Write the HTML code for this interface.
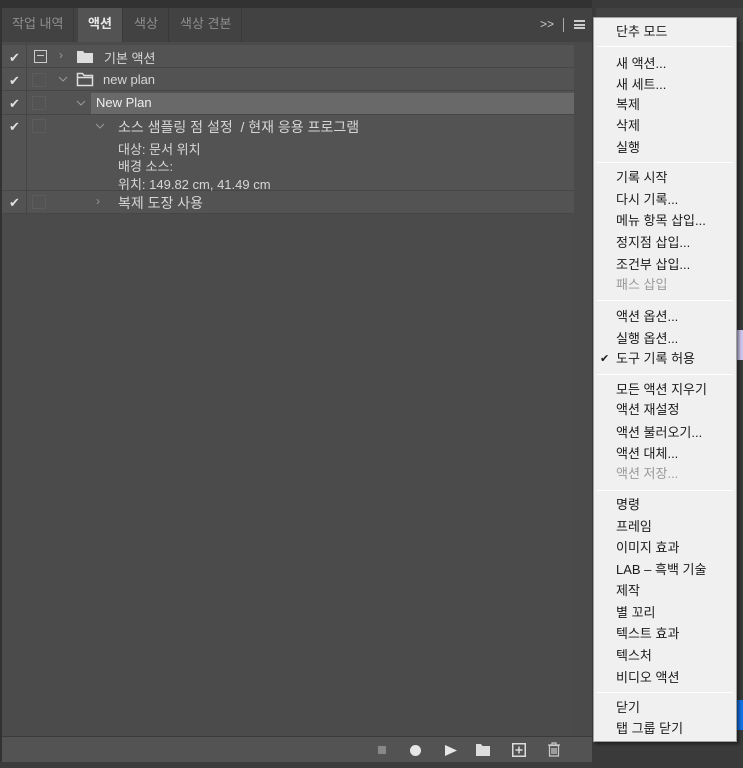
<!DOCTYPE html>
<html><head><meta charset="utf-8"><style>
*{margin:0;padding:0;box-sizing:border-box}
body{width:743px;height:768px;background:#323232;position:relative;overflow:hidden;font-family:"Liberation Sans","Noto Sans CJK KR",sans-serif;font-size:13px;color:#d6d6d6}
.abs{position:absolute}
.tabbar{left:2px;top:8px;width:590px;height:34px;background:#424242}
.tab{position:absolute;top:0;height:34px;line-height:31px;color:#8e8e8e;font-size:13px;padding:0 10px;border-right:1px solid #383838}
.tab.on{background:#535353;color:#e8e8e8;font-weight:bold}
.panel{left:2px;top:42px;width:590px;height:720px;background:#4b4b4b}
.row{position:absolute;left:2px;width:572px;background:#535353;border-bottom:1px solid #464646}
.chk{position:absolute;left:9px;color:#e0e0e0;font-size:13px}
.colsep{position:absolute;left:26px;top:42px;width:1px;height:174px;background:#454545}
.box{position:absolute;left:32px;width:14px;height:14px;border:1px solid #5c5c5c}
.txt{position:absolute;white-space:nowrap}
.menu{left:593px;top:17px;width:144px;height:725px;background:#f0f0f0;border:1px solid #a0a0a0;box-shadow:2px 2px 3px rgba(0,0,0,.5)}
.mi{position:absolute;left:22px;color:#1a1a1a;font-size:13px;white-space:nowrap;line-height:16px}
.mi.dis{color:#9a9a9a}
.sep{position:absolute;left:3px;width:136px;height:1px;background:#bdbdbd;border-bottom:1px solid #fff}
</style></head><body>
<div class="abs tabbar">
 <div class="tab" style="left:0">작업 내역</div>
 <div class="tab on" style="left:76px">액션</div>
 <div class="tab" style="left:122px">색상</div>
 <div class="tab" style="left:168px">색상 견본</div>
 <div class="txt" style="left:538px;top:9px;color:#ccc;font-size:12px">&gt;&gt;</div>
 <div class="abs" style="left:561px;top:10px;width:1px;height:14px;background:#aaa"></div>
 <div class="abs" style="left:572px;top:12px;width:11px;height:9px;border-top:2px solid #ccc;border-bottom:2px solid #ccc"><div style="margin-top:1.5px;height:2px;background:#ccc"></div></div>
</div>
<div class="abs panel"></div>
<div class="abs" style="left:574px;top:42px;width:18px;height:694px;background:#4a4a4a"></div>
<div class="row" style="top:45px;height:23px"></div>
<div class="row" style="top:68px;height:23px"></div>
<div class="row" style="top:91px;height:24px"></div>
<div class="abs" style="left:91px;top:93px;width:483px;height:21px;background:#696969"></div>
<div class="row" style="top:115px;height:76px"></div>
<div class="row" style="top:191px;height:23px"></div>
<div class="colsep"></div>
<div class="chk" style="top:50px">✔</div>
<div class="chk" style="top:73px">✔</div>
<div class="chk" style="top:96px">✔</div>
<div class="chk" style="top:119px">✔</div>
<div class="chk" style="top:195px">✔</div>
<div class="abs" style="left:34px;top:50px;width:13px;height:13px;border:1.5px solid #ccc"><div style="margin:3.5px 2px;height:1.5px;background:#ccc"></div></div>
<div class="box" style="top:73px"></div><div class="box" style="top:96px"></div><div class="box" style="top:119px"></div><div class="box" style="top:195px"></div>
<div class="txt" style="left:59px;top:48px;color:#999;font-size:12px">›</div>
<svg class="abs" style="left:76px;top:49px" width="18" height="15"><path d="M1 2h6l1.5 2H17v10H1z" fill="#ddd"/></svg>
<div class="txt" style="left:104px;top:48px">기본 액션</div>
<svg class="abs" style="left:58px;top:75px" width="10" height="8"><path d="M1 2l4 4 4-4" stroke="#999" fill="none"/></svg>
<svg class="abs" style="left:76px;top:72px" width="18" height="15"><path d="M1.5 1.5h5l1.5 2h8.5v10H1.5z M1.5 5.5h15" stroke="#ddd" stroke-width="1.5" fill="none"/></svg>
<div class="txt" style="left:103px;top:72px">new plan</div>
<svg class="abs" style="left:76px;top:99px" width="10" height="8"><path d="M1 2l4 4 4-4" stroke="#999" fill="none"/></svg>
<div class="txt" style="left:96px;top:95px;color:#eee">New Plan</div>
<svg class="abs" style="left:95px;top:122px" width="10" height="8"><path d="M1 2l4 4 4-4" stroke="#999" fill="none"/></svg>
<div class="txt" style="left:118px;top:117px;font-size:14px">소스 샘플링 점 설정&nbsp; / 현재 응용 프로그램</div>
<div class="txt" style="left:118px;top:139px">대상: 문서 위치</div>
<div class="txt" style="left:118px;top:156px">배경 소스:</div>
<div class="txt" style="left:118px;top:174px">위치: 149.82 cm, 41.49 cm</div>
<div class="txt" style="left:96px;top:194px;color:#999;font-size:12px">›</div>
<div class="txt" style="left:118px;top:193px;font-size:14px">복제 도장 사용</div>
<div class="abs" style="left:2px;top:736px;width:590px;height:1px;background:#3a3a3a"></div>
<div class="abs" style="left:2px;top:737px;width:590px;height:25px;background:#535353"></div>
<div class="abs" style="left:0;top:762px;width:592px;height:6px;background:#3c3c3c"></div>
<div class="abs" style="left:378px;top:746px;width:8px;height:8px;background:#888"></div>
<div class="abs" style="left:410px;top:745px;width:11px;height:11px;border-radius:50%;background:#e6e6e6"></div>
<svg class="abs" style="left:444px;top:744px" width="14" height="13"><path d="M1 1l12 5.5L1 12z" fill="#e6e6e6"/></svg>
<svg class="abs" style="left:475px;top:743px" width="16" height="14"><path d="M1 1h5l1.5 2H15v10H1z" fill="#ddd"/></svg>
<svg class="abs" style="left:512px;top:743px" width="14" height="14"><rect x=".75" y=".75" width="12.5" height="12.5" fill="none" stroke="#ddd" stroke-width="1.5"/><path d="M7 3.5v7M3.5 7h7" stroke="#ddd" stroke-width="1.5"/></svg>
<svg class="abs" style="left:547px;top:742px" width="14" height="15"><path d="M1 3h12M5 3V1h4v2M2.5 3.5h9v10.5h-9z M5 6v6M7 6v6M9 6v6" stroke="#ccc" stroke-width="1.2" fill="none"/></svg>
<div class="abs" style="left:592px;top:0;width:151px;height:768px;background:#3a3a3a"></div>
<div class="abs" style="left:596px;top:8px;width:147px;height:34px;background:#424242"></div>
<div class="abs" style="left:737px;top:330px;width:6px;height:30px;background:#cfc8ee"></div>
<div class="abs" style="left:737px;top:700px;width:6px;height:30px;background:#1473e6"></div>
<div class="abs menu">
 <div class="mi" style="top:6px">단추 모드</div>
 <div class="sep" style="top:28px"></div>
 <div class="mi" style="top:38px">새 액션...</div>
 <div class="mi" style="top:59px">새 세트...</div>
 <div class="mi" style="top:79px">복제</div>
 <div class="mi" style="top:100px">삭제</div>
 <div class="mi" style="top:122px">실행</div>
 <div class="sep" style="top:144px"></div>
 <div class="mi" style="top:152px">기록 시작</div>
 <div class="mi" style="top:174px">다시 기록...</div>
 <div class="mi" style="top:195px">메뉴 항목 삽입...</div>
 <div class="mi" style="top:217px">정지점 삽입...</div>
 <div class="mi" style="top:239px">조건부 삽입...</div>
 <div class="mi dis" style="top:259px">패스 삽입</div>
 <div class="sep" style="top:282px"></div>
 <div class="mi" style="top:291px">액션 옵션...</div>
 <div class="mi" style="top:313px">실행 옵션...</div>
 <div class="mi" style="left:6px;top:333px;font-size:11px">✔</div>
 <div class="mi" style="top:333px">도구 기록 허용</div>
 <div class="sep" style="top:356px"></div>
 <div class="mi" style="top:364px">모든 액션 지우기</div>
 <div class="mi" style="top:384px">액션 재설정</div>
 <div class="mi" style="top:407px">액션 불러오기...</div>
 <div class="mi" style="top:428px">액션 대체...</div>
 <div class="mi dis" style="top:448px">액션 저장...</div>
 <div class="sep" style="top:472px"></div>
 <div class="mi" style="top:479px">명령</div>
 <div class="mi" style="top:501px">프레임</div>
 <div class="mi" style="top:522px">이미지 효과</div>
 <div class="mi" style="top:544px">LAB – 흑백 기술</div>
 <div class="mi" style="top:565px">제작</div>
 <div class="mi" style="top:587px">별 꼬리</div>
 <div class="mi" style="top:608px">텍스트 효과</div>
 <div class="mi" style="top:630px">텍스처</div>
 <div class="mi" style="top:652px">비디오 액션</div>
 <div class="sep" style="top:674px"></div>
 <div class="mi" style="top:682px">닫기</div>
 <div class="mi" style="top:703px">탭 그룹 닫기</div>
</div>
</body></html>
